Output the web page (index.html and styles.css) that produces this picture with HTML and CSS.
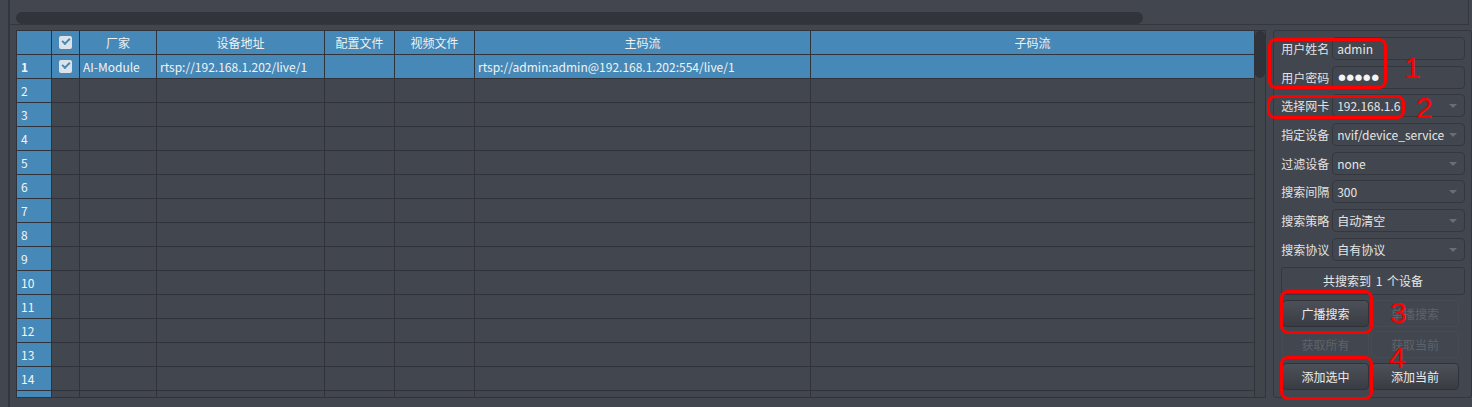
FILE: index.html
```html
<!DOCTYPE html>
<html lang="zh-CN">
<head>
    <meta charset="UTF-8">
    <title>设备搜索</title>
    <link rel="stylesheet" href="styles.css">
</head>
<body>

    <div class="frame">
        <!-- 顶部横向滚动条 -->
        <div class="top">
            <div class="hscroll-handle"></div>
        </div>

        <div class="content">
            <!-- 设备列表 -->
            <div class="table-wrap">
                <div class="grid" id="grid">
                    <div class="cell head"></div>
                    <div class="cell head chk-cell"><span class="checkbox"></span></div>
                    <div class="cell head">厂家</div>
                    <div class="cell head">设备地址</div>
                    <div class="cell head">配置文件</div>
                    <div class="cell head">视频文件</div>
                    <div class="cell head">主码流</div>
                    <div class="cell head">子码流</div>

                    <div class="cell rowhead current">1</div>
                    <div class="cell sel chk-cell"><span class="checkbox"></span></div>
                    <div class="cell sel">AI-Module</div>
                    <div class="cell sel">rtsp://192.168.1.202/live/1</div>
                    <div class="cell sel"></div>
                    <div class="cell sel"></div>
                    <div class="cell sel">rtsp://admin:admin@192.168.1.202:554/live/1</div>
                    <div class="cell sel"></div>
                </div>
                <div class="vscroll">
                    <div class="vscroll-handle"></div>
                </div>
            </div>

            <!-- 右侧参数面板 -->
            <div class="panel">
                <div class="form-row">
                    <span class="label">用户姓名</span>
                    <div class="field">admin</div>
                </div>
                <div class="form-row">
                    <span class="label">用户密码</span>
                    <div class="field"><span class="dots">●●●●●</span></div>
                </div>
                <div class="form-row">
                    <span class="label">选择网卡</span>
                    <div class="field combo">192.168.1.6</div>
                </div>
                <div class="form-row">
                    <span class="label">指定设备</span>
                    <div class="field combo">nvif/device_service</div>
                </div>
                <div class="form-row">
                    <span class="label">过滤设备</span>
                    <div class="field combo">none</div>
                </div>
                <div class="form-row">
                    <span class="label">搜索间隔</span>
                    <div class="field combo">300</div>
                </div>
                <div class="form-row">
                    <span class="label">搜索策略</span>
                    <div class="field combo">自动清空</div>
                </div>
                <div class="form-row">
                    <span class="label">搜索协议</span>
                    <div class="field combo">自有协议</div>
                </div>

                <div class="count">共搜索到&nbsp;1&nbsp;个设备</div>

                <div class="buttons">
                    <button>广播搜索</button>
                    <button disabled>单播搜索</button>
                    <button disabled>获取所有</button>
                    <button disabled>获取当前</button>
                    <button>添加选中</button>
                    <button>添加当前</button>
                </div>
            </div>
        </div>
    </div>

    <!-- 标注 -->
    <div class="mark mark-1"></div>
    <div class="mark mark-2"></div>
    <div class="mark mark-3"></div>
    <div class="mark mark-4"></div>
    <span class="num num-1">1</span>
    <span class="num num-2">2</span>
    <span class="num num-3">3</span>
    <span class="num num-4">4</span>

    <script>
    // 空行 2 - 15
    const grid = document.getElementById('grid');
    for (let i = 2; i <= 15; i++) {
        let html = '<div class="cell rowhead">' + i + '</div>';
        for (let c = 0; c < 7; c++) {
            html += '<div class="cell"></div>';
        }
        grid.insertAdjacentHTML('beforeend', html);
    }
    </script>

</body>
</html>
```

FILE: styles.css
```css
body {
    font-family: "Noto Sans CJK SC", "Noto Sans", sans-serif;
    font-size: 12px;
    margin: 0;
    width: 1472px;
    height: 407px;
    overflow: hidden;
    background-color: #42464e;
    color: #e4e4e4;
    position: relative;
}

.frame {
    margin-left: 8px;
    border-left: 2px solid #33363c;
    height: 407px;
}

.top {
    height: 24px;
    width: 1452px;
    border-bottom: 1px solid #34373d;
    border-right: 1px solid #34373d;
    padding-left: 6px;
    box-sizing: content-box;
}

.hscroll-handle {
    width: 1127px;
    height: 12px;
    position: relative;
    top: 12px;
    border-radius: 6px;
    background-color: #31343b;
}

.content {
    display: flex;
    margin-top: 5px;
    padding-left: 6px;
}

.table-wrap {
    display: flex;
    height: 366px;
    overflow: hidden;
    border: 1px solid #30333a;
    background-color: #30333a;
}

.grid {
    display: grid;
    grid-template-columns: 34px 27px 76px 167px 69px 79px 335px 443px;
    grid-auto-rows: 23px;
    gap: 1px;
    align-content: start;
}

.cell {
    background-color: #42464e;
    display: flex;
    align-items: center;
    padding-left: 3px;
    white-space: nowrap;
    overflow: hidden;
}

.cell.head {
    background-color: #4689b8;
    color: #f0f0f0;
    justify-content: center;
    padding-left: 0;
}

.cell.sel {
    background-color: #4689b8;
    color: #f2f2f2;
}

.cell.rowhead {
    background-color: #4689b8;
    color: #f4f4f4;
    padding-left: 4px;
}

.cell.current {
    font-weight: bold;
}

.chk-cell {
    justify-content: center;
    padding-left: 0;
}

.checkbox {
    width: 13px;
    height: 13px;
    border-radius: 2px;
    background-color: #dde2e8;
    position: relative;
}

    .checkbox::after {
        content: "";
        position: absolute;
        left: 3px;
        top: 2px;
        width: 6px;
        height: 3px;
        border-left: 2px solid #4689b8;
        border-bottom: 2px solid #4689b8;
        transform: rotate(-45deg);
    }

.vscroll {
    width: 11px;
    margin-left: 1px;
    background-color: #40444b;
}

.vscroll-handle {
    width: 10px;
    height: 47px;
    border-radius: 5px;
    background-color: #30333a;
}

.panel {
    margin-left: 7px;
    width: 184px;
    height: 360px;
    padding: 6px 6px 0 7px;
    border: 1px solid #34373d;
    border-radius: 3px;
    display: flex;
    flex-direction: column;
    gap: 5.7px;
}

.form-row {
    display: flex;
    align-items: center;
    height: 23px;
}

.label {
    width: 51px;
    color: #e2e2e2;
}

.field {
    flex: 1;
    height: 21px;
    border: 1px solid #34373d;
    border-radius: 4px;
    padding-left: 4px;
    display: flex;
    align-items: center;
    color: #e6e6e6;
    position: relative;
}

.combo::after {
    content: "";
    position: absolute;
    right: 7px;
    top: 9px;
    border-left: 4px solid transparent;
    border-right: 4px solid transparent;
    border-top: 4px solid #686d76;
}

.dots {
    font-family: "DejaVu Sans", sans-serif;
    font-size: 8.5px;
    letter-spacing: 0.9px;
    margin-left: 1px;
    color: #f4f4f4;
}

.count {
    margin-top: 0.3px;
    height: 26px;
    border: 1px solid #34373d;
    border-radius: 3px;
    display: flex;
    align-items: center;
    justify-content: center;
    color: #e6e6e6;
    word-spacing: 2px;
}

.buttons {
    display: grid;
    grid-template-columns: 87px 88px;
    grid-auto-rows: 27px;
    column-gap: 2px;
    row-gap: 4.5px;
    margin-top: -0.7px;
    padding-left: 1px;
}

button {
    font-family: inherit;
    font-size: 12px;
    color: #ececec;
    border: 1px solid #2f3238;
    border-radius: 4px;
    background: linear-gradient(#4c5058, #393c43);
    padding: 0;
}

    button:disabled {
        background: #42464e;
        border-color: #474b53;
        color: #5e636b;
    }

.mark {
    position: absolute;
    border: 3px solid #ff0000;
    border-radius: 8px;
    box-sizing: border-box;
}

.mark-1 { left: 1268px; top: 38px; width: 119px; height: 51px; }
.mark-2 { left: 1267px; top: 95px; width: 138px; height: 24px; }
.mark-3 { left: 1280px; top: 290px; width: 93px; height: 44px; }
.mark-4 { left: 1280px; top: 356px; width: 93px; height: 44px; }

.num {
    position: absolute;
    font-family: "Liberation Sans", sans-serif;
    font-size: 30px;
    line-height: 30px;
    color: #ff0000;
}

.num-1 { left: 1404px; top: 53px; }
.num-2 { left: 1416px; top: 93px; }
.num-3 { left: 1390px; top: 298px; }
.num-4 { left: 1389px; top: 343px; }
```
